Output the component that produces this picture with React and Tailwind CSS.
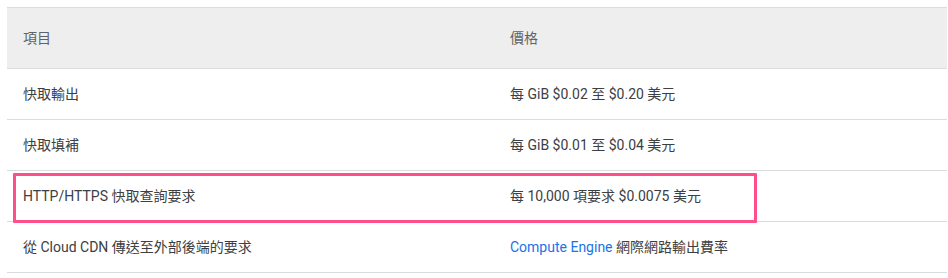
import React from 'react';

const rows = [
  { item: '快取輸出', price: '每 GiB $0.02 至 $0.20 美元' },
  { item: '快取填補', price: '每 GiB $0.01 至 $0.04 美元' },
  { item: 'HTTP/HTTPS 快取查詢要求', price: '每 10,000 項要求 $0.0075 美元' },
  {
    item: '從 Cloud CDN 傳送至外部後端的要求',
    price: (
      <>
        <a href="#" className="text-[#1a73e8]">Compute Engine</a> 網際網路輸出費率
      </>
    ),
  },
];

const App = () => (
  <div className="bg-white w-[948px] h-[278px] pt-[7px] pl-[7px] font-['Roboto','Noto_Sans_CJK_TC',sans-serif] text-[14px] text-[#3c4043]">
    <div className="relative w-[940px]">
      <table className="w-full border-collapse">
        <thead>
          <tr className="bg-[#eeeeee] border-y border-[#dadce0]">
            <th className="h-[61px] w-[487px] pl-4 text-left font-normal text-[#5f6368]">項目</th>
            <th className="h-[61px] pl-4 text-left font-normal text-[#5f6368]">價格</th>
          </tr>
        </thead>
        <tbody>
          {rows.map((r, i) => (
            <tr key={i} className="border-b border-[#dadce0]">
              <td className="h-[51px] pl-4 pt-[1px]">{r.item}</td>
              <td className="h-[51px] pl-4 pt-[1px]">{r.price}</td>
            </tr>
          ))}
        </tbody>
      </table>
      {/* highlight around the query request row */}
      <div className="absolute left-[6px] top-[166px] w-[744px] h-[50px] border-[3px] border-[#ff4f8b] rounded-[1px] pointer-events-none" />
    </div>
  </div>
);

export default App;
